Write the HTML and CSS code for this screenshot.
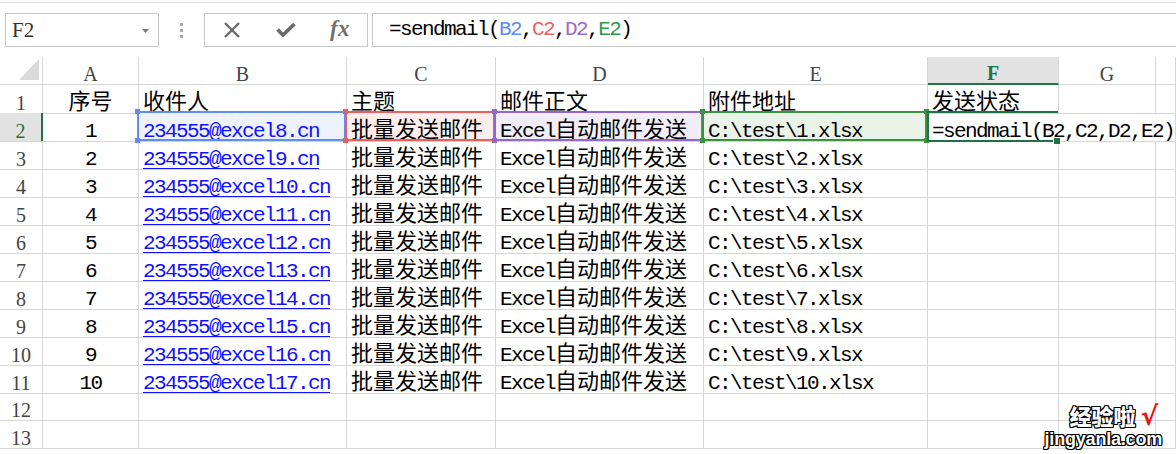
FILE: index.html
```html
<!DOCTYPE html>
<html lang="zh-CN">
<head>
<meta charset="utf-8">
<title>sendmail</title>
<link rel="stylesheet" href="styles.css">
</head>
<body>
<div class="top-rule"></div>
<div class="toolbar">
  <div class="namebox">
    <span class="name">F2</span>
    <svg class="caret" width="7" height="4" viewBox="0 0 7 4"><path d="M0 0h7L3.5 4z" fill="#7a7a7a"/></svg>
  </div>
  <div class="grip"><i></i><i></i><i></i></div>
  <div class="fxbox">
    <span class="slot"><svg width="18" height="16" viewBox="0 0 18 16"><path d="M2 1l14 14M16 1L2 15" stroke="#6a6a6a" stroke-width="2.4" fill="none"/></svg></span>
    <span class="slot"><svg width="20" height="14" viewBox="0 0 20 14"><path d="M1.5 6.5l5.5 5.5L18.5 1" stroke="#6a6a6a" stroke-width="3.6" fill="none"/></svg></span>
    <span class="slot fx">fx</span>
  </div>
  <div class="formula"><span class="en">=sendmail(<span class="k-blue">B2</span>,<span class="k-red">C2</span>,<span class="k-purple">D2</span>,<span class="k-green">E2</span>)</span></div>
</div>

<div class="sheet">
  <div class="row hdr">
    <div class="corner"><svg width="20" height="21" viewBox="0 0 20 21"><path d="M20 0V21H0z" fill="#dadada"/></svg></div>
    <div class="ch">A</div><div class="ch">B</div><div class="ch">C</div><div class="ch">D</div><div class="ch">E</div><div class="ch sel">F</div><div class="ch">G</div><div class="ch"></div>
  </div>
  <div class="row">
    <div class="rh">1</div>
    <div class="c ctr"><span class="cn">序号</span></div>
    <div class="c"><span class="cn">收件人</span></div>
    <div class="c"><span class="cn">主题</span></div>
    <div class="c"><span class="cn">邮件正文</span></div>
    <div class="c"><span class="cn">附件地址</span></div>
    <div class="c"><span class="cn">发送状态</span></div>
    <div class="c"></div><div class="c"></div>
  </div>
  <div class="row">
    <div class="rh sel">2</div>
    <div class="c ctr"><span class="en">1</span></div>
    <div class="c ref blue"><i class="h tl"></i><i class="h tr"></i><i class="h bl"></i><i class="h br"></i><span class="en link">234555@excel8.cn</span></div>
    <div class="c ref red"><i class="h tl"></i><i class="h tr"></i><i class="h bl"></i><i class="h br"></i><span class="cn">批量发送邮件</span></div>
    <div class="c ref purple"><i class="h tl"></i><i class="h tr"></i><i class="h bl"></i><i class="h br"></i><span class="en">Excel</span><span class="cn">自动邮件发送</span></div>
    <div class="c ref green"><i class="h tl"></i><i class="h tr"></i><i class="h bl"></i><i class="h br"></i><span class="en">C:\test\1.xlsx</span></div>
    <div class="c active"><i class="fill-handle"></i><span class="en">=sendmail(B2,C2,D2,E2)</span></div>
    <div class="c under-text"></div><div class="c"></div>
  </div>
  <div class="row">
    <div class="rh">3</div>
    <div class="c ctr"><span class="en">2</span></div>
    <div class="c"><span class="en link">234555@excel9.cn</span></div>
    <div class="c"><span class="cn">批量发送邮件</span></div>
    <div class="c"><span class="en">Excel</span><span class="cn">自动邮件发送</span></div>
    <div class="c"><span class="en">C:\test\2.xlsx</span></div>
    <div class="c"></div><div class="c"></div><div class="c"></div>
  </div>
  <div class="row">
    <div class="rh">4</div>
    <div class="c ctr"><span class="en">3</span></div>
    <div class="c"><span class="en link">234555@excel10.cn</span></div>
    <div class="c"><span class="cn">批量发送邮件</span></div>
    <div class="c"><span class="en">Excel</span><span class="cn">自动邮件发送</span></div>
    <div class="c"><span class="en">C:\test\3.xlsx</span></div>
    <div class="c"></div><div class="c"></div><div class="c"></div>
  </div>
  <div class="row">
    <div class="rh">5</div>
    <div class="c ctr"><span class="en">4</span></div>
    <div class="c"><span class="en link">234555@excel11.cn</span></div>
    <div class="c"><span class="cn">批量发送邮件</span></div>
    <div class="c"><span class="en">Excel</span><span class="cn">自动邮件发送</span></div>
    <div class="c"><span class="en">C:\test\4.xlsx</span></div>
    <div class="c"></div><div class="c"></div><div class="c"></div>
  </div>
  <div class="row">
    <div class="rh">6</div>
    <div class="c ctr"><span class="en">5</span></div>
    <div class="c"><span class="en link">234555@excel12.cn</span></div>
    <div class="c"><span class="cn">批量发送邮件</span></div>
    <div class="c"><span class="en">Excel</span><span class="cn">自动邮件发送</span></div>
    <div class="c"><span class="en">C:\test\5.xlsx</span></div>
    <div class="c"></div><div class="c"></div><div class="c"></div>
  </div>
  <div class="row">
    <div class="rh">7</div>
    <div class="c ctr"><span class="en">6</span></div>
    <div class="c"><span class="en link">234555@excel13.cn</span></div>
    <div class="c"><span class="cn">批量发送邮件</span></div>
    <div class="c"><span class="en">Excel</span><span class="cn">自动邮件发送</span></div>
    <div class="c"><span class="en">C:\test\6.xlsx</span></div>
    <div class="c"></div><div class="c"></div><div class="c"></div>
  </div>
  <div class="row">
    <div class="rh">8</div>
    <div class="c ctr"><span class="en">7</span></div>
    <div class="c"><span class="en link">234555@excel14.cn</span></div>
    <div class="c"><span class="cn">批量发送邮件</span></div>
    <div class="c"><span class="en">Excel</span><span class="cn">自动邮件发送</span></div>
    <div class="c"><span class="en">C:\test\7.xlsx</span></div>
    <div class="c"></div><div class="c"></div><div class="c"></div>
  </div>
  <div class="row">
    <div class="rh">9</div>
    <div class="c ctr"><span class="en">8</span></div>
    <div class="c"><span class="en link">234555@excel15.cn</span></div>
    <div class="c"><span class="cn">批量发送邮件</span></div>
    <div class="c"><span class="en">Excel</span><span class="cn">自动邮件发送</span></div>
    <div class="c"><span class="en">C:\test\8.xlsx</span></div>
    <div class="c"></div><div class="c"></div><div class="c"></div>
  </div>
  <div class="row">
    <div class="rh">10</div>
    <div class="c ctr"><span class="en">9</span></div>
    <div class="c"><span class="en link">234555@excel16.cn</span></div>
    <div class="c"><span class="cn">批量发送邮件</span></div>
    <div class="c"><span class="en">Excel</span><span class="cn">自动邮件发送</span></div>
    <div class="c"><span class="en">C:\test\9.xlsx</span></div>
    <div class="c"></div><div class="c"></div><div class="c"></div>
  </div>
  <div class="row">
    <div class="rh">11</div>
    <div class="c ctr"><span class="en">10</span></div>
    <div class="c"><span class="en link">234555@excel17.cn</span></div>
    <div class="c"><span class="cn">批量发送邮件</span></div>
    <div class="c"><span class="en">Excel</span><span class="cn">自动邮件发送</span></div>
    <div class="c"><span class="en">C:\test\10.xlsx</span></div>
    <div class="c"></div><div class="c"></div><div class="c"></div>
  </div>
  <div class="row">
    <div class="rh">12</div>
    <div class="c"></div><div class="c"></div><div class="c"></div><div class="c"></div><div class="c"></div><div class="c"></div><div class="c"></div><div class="c"></div>
  </div>
  <div class="row">
    <div class="rh">13</div>
    <div class="c"></div><div class="c"></div><div class="c"></div><div class="c"></div><div class="c"></div><div class="c"></div><div class="c"></div><div class="c"></div>
  </div>
</div>

<div class="watermark">
  <div class="wm-cn">经验啦 <span class="tick">√</span></div>
  <div class="wm-en">jingyanla.com</div>
</div>
</body>
</html>
```

FILE: styles.css
```css
html, body {
  margin: 0;
  padding: 0;
  background: #fff;
}
body {
  width: 1176px;
  height: 454px;
  overflow: hidden;
  position: relative;
  font-family: "Liberation Mono", monospace;
  color: #000;
}

.top-rule {
  height: 2px;
  border-bottom: 1px solid #dcdcdc;
}

/* ---------- toolbar ---------- */
.toolbar {
  display: flex;
  height: 34px;
  margin-top: 10px;
}
.namebox {
  box-sizing: border-box;
  margin-left: 5px;
  width: 154px;
  height: 34px;
  border: 1px solid #c8c8c8;
  display: flex;
  align-items: center;
  justify-content: space-between;
  padding: 0 9px 0 6px;
}
.name {
  font-family: "Liberation Serif", serif;
  font-size: 21px;
  color: #333;
}
.caret { margin-top: 1px; }

.grip {
  width: 45px;
  display: flex;
  flex-direction: column;
  align-items: center;
  justify-content: center;
  gap: 3px;
}
.grip i {
  display: block;
  width: 3px;
  height: 3px;
  background: #a8a8a8;
}

.fxbox {
  box-sizing: border-box;
  width: 164px;
  height: 34px;
  border: 1px solid #c8c8c8;
  display: flex;
  align-items: center;
}
.slot {
  width: 54px;
  display: flex;
  justify-content: center;
  align-items: center;
}
.fx {
  font-family: "Liberation Serif", serif;
  font-style: italic;
  font-weight: bold;
  font-size: 23px;
  color: #707070;
  letter-spacing: 0.5px;
  padding-bottom: 2px;
}

.formula {
  box-sizing: border-box;
  flex: 1;
  margin-left: 4px;
  height: 34px;
  border: 1px solid #c8c8c8;
  border-right: none;
  display: flex;
  align-items: center;
  padding-left: 16px;
}
.k-blue { color: #5b8ef0; }
.k-red { color: #ec6260; }
.k-purple { color: #9a68d2; }
.k-green { color: #2e9a48; }

/* ---------- text runs ---------- */
.en {
  display: inline-block;
  font-family: "Liberation Mono", monospace;
  font-size: 21px;
  letter-spacing: -1.6px;
  line-height: 18px;
}
.cn {
  display: inline-block;
  font-family: "Noto Sans CJK SC", sans-serif;
  font-size: 22px;
  line-height: 22px;
}
.link {
  color: #1111ff;
  text-decoration: underline;
  text-decoration-thickness: 1px;
  text-underline-offset: 3px;
}

/* ---------- sheet ---------- */
.sheet {
  margin-top: 10px;
}
.row {
  display: grid;
  grid-template-columns: 43px 96px 208px 149px 208px 224px 131px 97px 1fr;
  height: 28px;
}
.row > div {
  box-sizing: border-box;
  border-right: 1px solid #d6d6d6;
  border-bottom: 1px solid #d6d6d6;
  white-space: nowrap;
}

.corner {
  display: flex;
  justify-content: flex-end;
  align-items: flex-end;
  padding: 0 3px 4px 0;
}
.ch, .rh {
  display: flex;
  justify-content: center;
  align-items: flex-end;
  font-family: "Liberation Serif", serif;
  font-size: 20px;
  line-height: 20px;
  color: #444;
  padding-bottom: 0;
}
.ch.sel {
  background: #e2e2e2;
  color: #217346;
  font-weight: bold;
  border-bottom: 2px solid #217346;
  padding-bottom: 0;
}
.rh.sel {
  background: #e2e2e2;
  color: #217346;
  border-right: 2px solid #217346;
}

.c {
  position: relative;
  padding: 1px 0 0 4px;
  font-family: "Noto Sans CJK SC", sans-serif;
  font-size: 22px;
  line-height: 27px;
}
.c.ctr {
  text-align: center;
  padding-left: 0;
}

/* reference highlight boxes */
.ref::before {
  content: "";
  position: absolute;
  left: -2px;
  top: -2px;
  right: 0;
  bottom: 0;
  border: 2px solid var(--rc);
  pointer-events: none;
}
.ref.blue { --rc: #5e8ff0; background: #edf2fd; }
.ref.red { --rc: #e8605e; background: #fdeeee; }
.ref.purple { --rc: #9466cc; background: #f2eef9; }
.ref.green { --rc: #3a9140; background: #e9f3e8; }
.h {
  position: absolute;
  width: 5px;
  height: 5px;
  background: var(--rc);
  z-index: 2;
}
.h.tl { left: -4px; top: -4px; }
.h.tr { right: -2px; top: -4px; }
.h.bl { left: -4px; bottom: -2px; }
.h.br { right: -2px; bottom: -2px; }

/* active cell */
.c.active {
  border-right-color: transparent;
  z-index: 3;
}
.c.active::before {
  content: "";
  position: absolute;
  left: -1px;
  top: -2px;
  right: 0;
  bottom: -1px;
  border: 2px solid #1e7145;
  border-right: none;
  pointer-events: none;
}
.fill-handle {
  position: absolute;
  right: -3px;
  bottom: -4px;
  width: 6px;
  height: 6px;
  background: #1e7145;
  border: 1px solid #fff;
}
.c.under-text { border-right-color: transparent; }

/* ---------- watermark ---------- */
.watermark {
  position: absolute;
  right: 14px;
  bottom: 4px;
  display: flex;
  flex-direction: column;
  align-items: flex-end;
  color: #fff;
  pointer-events: none;
}
.wm-cn {
  font-family: "Noto Sans CJK SC", sans-serif;
  font-weight: 900;
  font-size: 22px;
  line-height: 24px;
  margin-right: 4px;
  text-shadow: 1px 1px 0 #000, -1px -1px 0 #000, 1px -1px 0 #000, -1px 1px 0 #000, 0 1px 0 #000, 0 -1px 0 #000, 1px 0 0 #000, -1px 0 0 #000;
}
.tick {
  color: #ee1111;
  font-family: "DejaVu Sans", sans-serif;
  font-weight: bold;
  font-size: 26px;
  text-shadow: none;
}
.wm-en {
  font-family: "Liberation Sans", sans-serif;
  font-weight: bold;
  font-size: 18px;
  line-height: 22px;
  letter-spacing: -0.2px;
  text-shadow: 1px 1px 0 #000, -1px -1px 0 #000, 1px -1px 0 #000, -1px 1px 0 #000, 0 1px 0 #000, 0 -1px 0 #000, 1px 0 0 #000, -1px 0 0 #000;
}
```
